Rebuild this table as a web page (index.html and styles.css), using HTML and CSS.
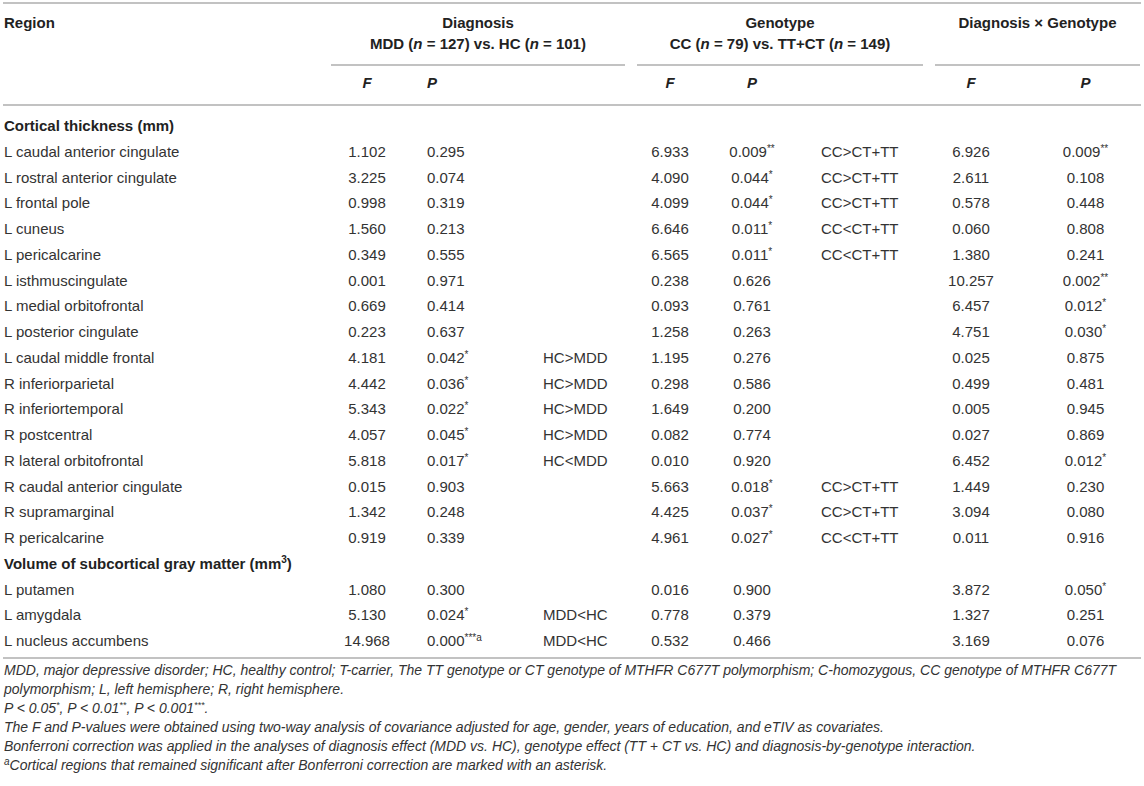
FILE: index.html
```html
<!DOCTYPE html>
<html lang="en">
<head>
<meta charset="utf-8">
<title>Table</title>
<link rel="stylesheet" href="styles.css">
</head>
<body>
<div class="page">
  <div class="table">
    <div class="head">
      <div class="row head-groups">
        <div class="c-reg region">Region</div>
        <div class="group g-dx">
          <div class="g-title">Diagnosis</div>
          <div class="g-sub">MDD (<i>n</i> = 127) vs. HC (<i>n</i> = 101)</div>
        </div>
        <div class="group g-gen">
          <div class="g-title">Genotype</div>
          <div class="g-sub">CC (<i>n</i> = 79) vs. TT+CT (<i>n</i> = 149)</div>
        </div>
        <div class="group g-int">
          <div class="g-title">Diagnosis × Genotype</div>
          <div class="g-sub"></div>
        </div>
      </div>
      <div class="row head-stats">
        <div class="c-reg"></div>
        <div class="c-f"><i>F</i></div>
        <div class="c-pl"><i>P</i></div>
        <div class="c-d1"></div>
        <div class="c-f"><i>F</i></div>
        <div class="c-p"><i>P</i></div>
        <div class="c-d2"></div>
        <div class="c-f"><i>F</i></div>
        <div class="c-p3"><i>P</i></div>
      </div>
    </div>
    <div class="body">
      <div class="row section"><div class="c-reg">Cortical thickness (mm)</div></div>
      <div class="row"><div class="c-reg">L caudal anterior cingulate</div><div class="c-f">1.102</div><div class="c-pl">0.295</div><div class="c-d1"></div><div class="c-f">6.933</div><div class="c-p">0.009<sup>**</sup></div><div class="c-d2">CC&gt;CT+TT</div><div class="c-f">6.926</div><div class="c-p3">0.009<sup>**</sup></div></div>
      <div class="row"><div class="c-reg">L rostral anterior cingulate</div><div class="c-f">3.225</div><div class="c-pl">0.074</div><div class="c-d1"></div><div class="c-f">4.090</div><div class="c-p">0.044<sup>*</sup></div><div class="c-d2">CC&gt;CT+TT</div><div class="c-f">2.611</div><div class="c-p3">0.108</div></div>
      <div class="row"><div class="c-reg">L frontal pole</div><div class="c-f">0.998</div><div class="c-pl">0.319</div><div class="c-d1"></div><div class="c-f">4.099</div><div class="c-p">0.044<sup>*</sup></div><div class="c-d2">CC&gt;CT+TT</div><div class="c-f">0.578</div><div class="c-p3">0.448</div></div>
      <div class="row"><div class="c-reg">L cuneus</div><div class="c-f">1.560</div><div class="c-pl">0.213</div><div class="c-d1"></div><div class="c-f">6.646</div><div class="c-p">0.011<sup>*</sup></div><div class="c-d2">CC&lt;CT+TT</div><div class="c-f">0.060</div><div class="c-p3">0.808</div></div>
      <div class="row"><div class="c-reg">L pericalcarine</div><div class="c-f">0.349</div><div class="c-pl">0.555</div><div class="c-d1"></div><div class="c-f">6.565</div><div class="c-p">0.011<sup>*</sup></div><div class="c-d2">CC&lt;CT+TT</div><div class="c-f">1.380</div><div class="c-p3">0.241</div></div>
      <div class="row"><div class="c-reg">L isthmuscingulate</div><div class="c-f">0.001</div><div class="c-pl">0.971</div><div class="c-d1"></div><div class="c-f">0.238</div><div class="c-p">0.626</div><div class="c-d2"></div><div class="c-f">10.257</div><div class="c-p3">0.002<sup>**</sup></div></div>
      <div class="row"><div class="c-reg">L medial orbitofrontal</div><div class="c-f">0.669</div><div class="c-pl">0.414</div><div class="c-d1"></div><div class="c-f">0.093</div><div class="c-p">0.761</div><div class="c-d2"></div><div class="c-f">6.457</div><div class="c-p3">0.012<sup>*</sup></div></div>
      <div class="row"><div class="c-reg">L posterior cingulate</div><div class="c-f">0.223</div><div class="c-pl">0.637</div><div class="c-d1"></div><div class="c-f">1.258</div><div class="c-p">0.263</div><div class="c-d2"></div><div class="c-f">4.751</div><div class="c-p3">0.030<sup>*</sup></div></div>
      <div class="row"><div class="c-reg">L caudal middle frontal</div><div class="c-f">4.181</div><div class="c-pl">0.042<sup>*</sup></div><div class="c-d1">HC&gt;MDD</div><div class="c-f">1.195</div><div class="c-p">0.276</div><div class="c-d2"></div><div class="c-f">0.025</div><div class="c-p3">0.875</div></div>
      <div class="row"><div class="c-reg">R inferiorparietal</div><div class="c-f">4.442</div><div class="c-pl">0.036<sup>*</sup></div><div class="c-d1">HC&gt;MDD</div><div class="c-f">0.298</div><div class="c-p">0.586</div><div class="c-d2"></div><div class="c-f">0.499</div><div class="c-p3">0.481</div></div>
      <div class="row"><div class="c-reg">R inferiortemporal</div><div class="c-f">5.343</div><div class="c-pl">0.022<sup>*</sup></div><div class="c-d1">HC&gt;MDD</div><div class="c-f">1.649</div><div class="c-p">0.200</div><div class="c-d2"></div><div class="c-f">0.005</div><div class="c-p3">0.945</div></div>
      <div class="row"><div class="c-reg">R postcentral</div><div class="c-f">4.057</div><div class="c-pl">0.045<sup>*</sup></div><div class="c-d1">HC&gt;MDD</div><div class="c-f">0.082</div><div class="c-p">0.774</div><div class="c-d2"></div><div class="c-f">0.027</div><div class="c-p3">0.869</div></div>
      <div class="row"><div class="c-reg">R lateral orbitofrontal</div><div class="c-f">5.818</div><div class="c-pl">0.017<sup>*</sup></div><div class="c-d1">HC&lt;MDD</div><div class="c-f">0.010</div><div class="c-p">0.920</div><div class="c-d2"></div><div class="c-f">6.452</div><div class="c-p3">0.012<sup>*</sup></div></div>
      <div class="row"><div class="c-reg">R caudal anterior cingulate</div><div class="c-f">0.015</div><div class="c-pl">0.903</div><div class="c-d1"></div><div class="c-f">5.663</div><div class="c-p">0.018<sup>*</sup></div><div class="c-d2">CC&gt;CT+TT</div><div class="c-f">1.449</div><div class="c-p3">0.230</div></div>
      <div class="row"><div class="c-reg">R supramarginal</div><div class="c-f">1.342</div><div class="c-pl">0.248</div><div class="c-d1"></div><div class="c-f">4.425</div><div class="c-p">0.037<sup>*</sup></div><div class="c-d2">CC&gt;CT+TT</div><div class="c-f">3.094</div><div class="c-p3">0.080</div></div>
      <div class="row"><div class="c-reg">R pericalcarine</div><div class="c-f">0.919</div><div class="c-pl">0.339</div><div class="c-d1"></div><div class="c-f">4.961</div><div class="c-p">0.027<sup>*</sup></div><div class="c-d2">CC&lt;CT+TT</div><div class="c-f">0.011</div><div class="c-p3">0.916</div></div>
      <div class="row section"><div class="c-reg">Volume of subcortical gray matter (mm<sup class="sup-num">3</sup>)</div></div>
      <div class="row"><div class="c-reg">L putamen</div><div class="c-f">1.080</div><div class="c-pl">0.300</div><div class="c-d1"></div><div class="c-f">0.016</div><div class="c-p">0.900</div><div class="c-d2"></div><div class="c-f">3.872</div><div class="c-p3">0.050<sup>*</sup></div></div>
      <div class="row"><div class="c-reg">L amygdala</div><div class="c-f">5.130</div><div class="c-pl">0.024<sup>*</sup></div><div class="c-d1">MDD&lt;HC</div><div class="c-f">0.778</div><div class="c-p">0.379</div><div class="c-d2"></div><div class="c-f">1.327</div><div class="c-p3">0.251</div></div>
      <div class="row"><div class="c-reg">L nucleus accumbens</div><div class="c-f">14.968</div><div class="c-pl">0.000<sup>***a</sup></div><div class="c-d1">MDD&lt;HC</div><div class="c-f">0.532</div><div class="c-p">0.466</div><div class="c-d2"></div><div class="c-f">3.169</div><div class="c-p3">0.076</div></div>
    </div>
  </div>
  <div class="notes">
    <p>MDD, major depressive disorder; HC, healthy control; T-carrier, The TT genotype or CT genotype of MTHFR C677T polymorphism; C-homozygous, CC genotype of MTHFR C677T polymorphism; L, left hemisphere; R, right hemisphere.</p>
    <p>P &lt; 0.05<sup>*</sup>, P &lt; 0.01<sup>**</sup>, P &lt; 0.001<sup>***</sup>.</p>
    <p>The F and P-values were obtained using two-way analysis of covariance adjusted for age, gender, years of education, and eTIV as covariates.</p>
    <p>Bonferroni correction was applied in the analyses of diagnosis effect (MDD vs. HC), genotype effect (TT + CT vs. HC) and diagnosis-by-genotype interaction.</p>
    <p><sup class="sup-a">a</sup>Cortical regions that remained significant after Bonferroni correction are marked with an asterisk.</p>
  </div>
</div>
</body>
</html>
```

FILE: styles.css
```css
* { box-sizing: border-box; }

html, body {
  margin: 0;
  padding: 0;
  background: #ffffff;
}

body {
  font-family: "Liberation Sans", Arial, Helvetica, sans-serif;
  color: #333333;
  font-size: 15px;
}

.page {
  width: 1144px;
  padding: 2px 3px 0 3px;
}

.table {
  border-top: 2px solid #c2c2c2;
  border-bottom: 2px solid #c2c2c2;
}

.row {
  display: grid;
  grid-template-columns: 328px 72px 128px 106px 66px 98px 134px 72px 134px;
  white-space: nowrap;
}

/* header */
.head {
  font-weight: bold;
  color: #222222;
  border-bottom: 2px solid #c2c2c2;
  line-height: 21px;
}

.head-groups {
  padding-top: 8px;
}

.region {
  align-self: start;
}

.group {
  text-align: center;
  padding-bottom: 10px;
  border-bottom: 2px solid #c2c2c2;
}

.g-dx { grid-column: 2 / span 3; margin-right: 12px; }
.g-gen { grid-column: 5 / span 3; margin-right: 12px; }
.g-int { grid-column: 8 / span 2; margin-right: 1px; }

.g-title, .g-sub {
  height: 21px;
}

.head-stats {
  margin-top: 6px;
  padding-bottom: 11px;
}

/* body */
.body {
  padding-top: 7px;
  padding-bottom: 3.25px;
}

.body .row {
  line-height: 25.75px;
  height: 25.75px;
}

.section {
  font-weight: bold;
  color: #222222;
}

.c-reg { padding-left: 1px; }
.c-f { text-align: center; }
.c-pl { padding-left: 24px; }
.c-d1 { padding-left: 12px; }
.c-p { text-align: center; }
.c-d2 { padding-left: 20px; }
.c-p3 { text-align: center; padding-left: 23px; }

sup {
  font-size: 10px;
  line-height: 0;
  vertical-align: 5px;
}

.sup-num {
  font-size: 10px;
  vertical-align: 6px;
}

/* notes */
.notes {
  padding: 2px 0 0 1px;
  font-style: italic;
  font-size: 14px;
  line-height: 19px;
  color: #333333;
}

.notes p {
  margin: 0;
}

.notes sup {
  font-size: 9px;
  vertical-align: 5px;
}

.notes .sup-a {
  font-size: 10px;
}
```
